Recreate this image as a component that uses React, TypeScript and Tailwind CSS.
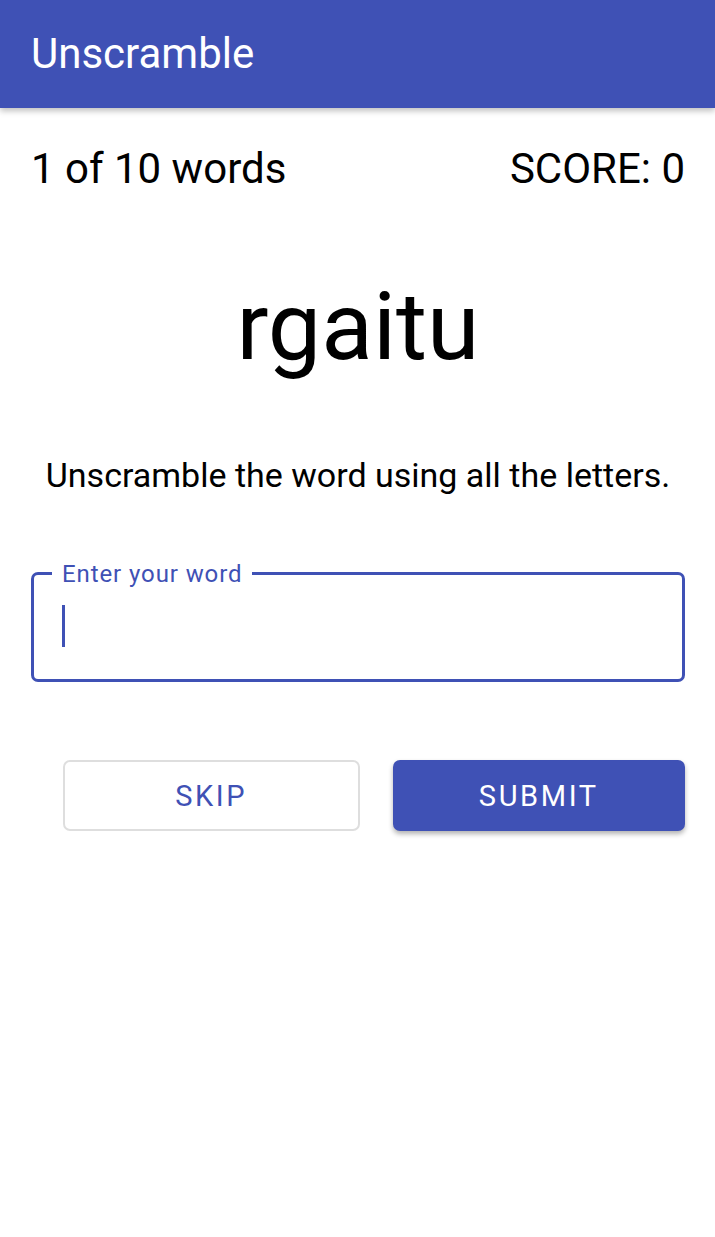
export default function App() {
    return (
        <div className="min-h-[1237px] bg-white font-['Roboto',sans-serif] text-black">
            {/* App bar */}
            <div className="h-[108px] bg-[#3f51b5] flex items-center px-[31px] shadow-[0_3px_6px_rgba(0,0,0,0.25)] relative">
                <h1 className="text-white text-[42px] leading-[48px]">Unscramble</h1>
            </div>

            <div className="pl-[31px] pr-[30px]">
                {/* Progress */}
                <div className="flex justify-between mt-[37px] text-[42px] leading-[48px]">
                    <span>1 of 10 words</span>
                    <span>SCORE: 0</span>
                </div>

                {/* Scrambled word */}
                <p className="mt-[78px] text-center text-[95px] leading-[112px]">rgaitu</p>

                {/* Instructions */}
                <p className="mt-[72px] text-center text-[34px] leading-[41px]">
                    Unscramble the word using all the letters.
                </p>

                {/* Input */}
                <div className="relative mt-[76px] h-[110px] rounded-[7px] border-[3px] border-[#3f51b5]">
                    <span className="absolute -top-[15px] left-[18px] bg-white px-[10px] text-[24px] leading-[28px] text-[#3f51b5] tracking-[0.9px]">
                        Enter your word
                    </span>
                    <div className="absolute left-[28px] top-[30px] w-[3px] h-[42px] bg-[#3f51b5]" />
                </div>

                {/* Buttons */}
                <div className="flex gap-[33px] mt-[78px] pl-[32px]">
                    <button className="flex-1 h-[71px] rounded-[7px] border-2 border-[#dedede] bg-white text-[#3f51b5] text-[29px] tracking-[2.6px] pt-[3px]">
                        SKIP
                    </button>
                    <button className="flex-1 h-[71px] rounded-[7px] bg-[#3f51b5] text-white text-[29px] tracking-[2.6px] pt-[3px] shadow-[0_3px_5px_rgba(0,0,0,0.3)]">
                        SUBMIT
                    </button>
                </div>
            </div>
        </div>
    )
}
